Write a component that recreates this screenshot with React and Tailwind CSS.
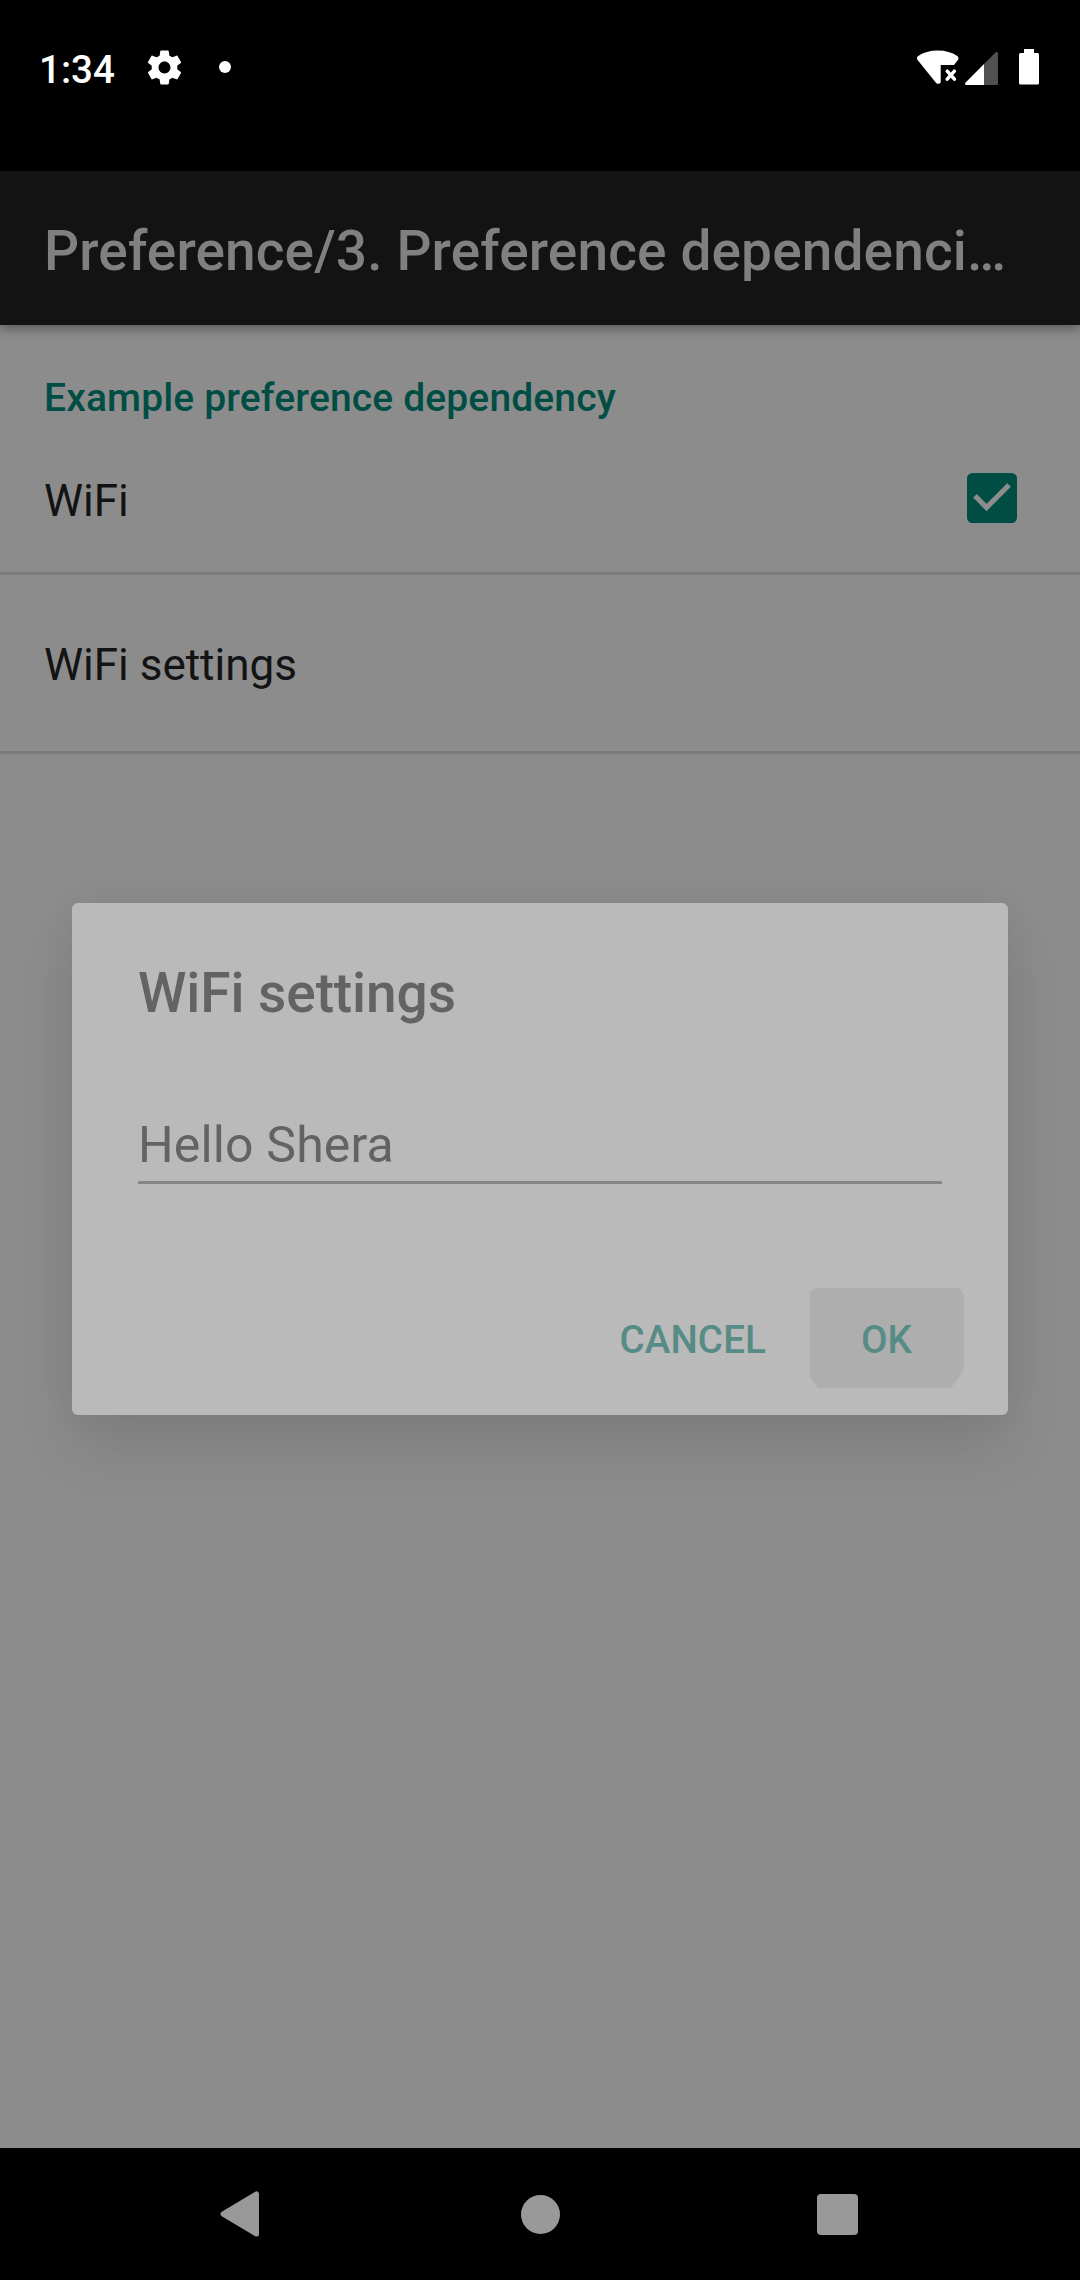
function GearIcon() {
  return (
    <svg className="ml-[30px] h-[41px] w-[41px] shrink-0" viewBox="0 0 24 24" fill="#fff">
      <path d="M19.43 12.98c.04-.32.07-.64.07-.98s-.03-.66-.07-.98l2.11-1.65c.19-.15.24-.42.12-.64l-2-3.46c-.12-.22-.39-.3-.61-.22l-2.49 1c-.52-.4-1.08-.73-1.69-.98l-.38-2.65C14.46 2.18 14.25 2 14 2h-4c-.25 0-.46.18-.49.42l-.38 2.65c-.61.25-1.17.59-1.69.98l-2.49-1c-.23-.09-.49 0-.61.22l-2 3.46c-.13.22-.07.49.12.64l2.11 1.65c-.04.32-.07.65-.07.98s.03.66.07.98l-2.11 1.65c-.19.15-.24.42-.12.64l2 3.46c.12.22.39.3.61.22l2.49-1c.52.4 1.08.73 1.69.98l.38 2.65c.03.24.24.42.49.42h4c.25 0 .46-.18.49-.42l.38-2.65c.61-.25 1.17-.59 1.69-.98l2.49 1c.23.09.49 0 .61-.22l2-3.46c.12-.22.07-.49-.12-.64l-2.11-1.65zM12 15.5c-1.93 0-3.5-1.57-3.5-3.5s1.57-3.5 3.5-3.5 3.5 1.57 3.5 3.5-1.57 3.5-3.5 3.5z" />
    </svg>
  );
}

function StatusBar() {
  return (
    <header className="flex h-[171px] shrink-0 items-start justify-between bg-black pr-[41px] pl-[39px]">
      <div className="flex h-[134px] items-center">
        <span className="relative top-[3px] w-[75px] text-[38.5px] leading-[46px] font-medium whitespace-nowrap text-white">1:34</span>
        <GearIcon />
        <span className="ml-[34px] h-3 w-3 rounded-full bg-white" />
      </div>
      <div className="flex h-[134px] items-center">
        <svg className="h-[36px] w-[42px]" viewBox="0 0 42 36" fill="#fff">
          <path d="M.6 11C-.4 9.600-.2 8 1.200 7 6.500 3.500 13 1.600 20.800 1.600S35 3.500 40.300 7c1.400 1 1.600 2.600.6 4L37 16H23.700v17.500c-1.200 1.700-3.700 1.700-5 0z" />
          <path d="M30.200 22.200l7.200 8M37.400 22.200L30.200 30.200" stroke="#fff" strokeWidth="3.500" strokeLinecap="round" />
        </svg>
        <svg className="ml-[6px] h-[36px] w-[34px]" viewBox="0 0 34 36">
          <path d="M19 15L30.500 3.500c1-1 2.500-.5 2.500 1V34.500a1.500 1.500 0 0 1-1.500 1.500H19z" fill="#505050" />
          <path d="M19 15V36H1.500C0 36-.4 34.500.6 33.500z" fill="#fff" />
        </svg>
        <svg className="ml-[20px] h-[36px] w-[20px]" viewBox="0 0 20 36" fill="#fff">
          <path d="M5 0h10v4h3.500A1.500 1.500 0 0 1 20 5.500v28.500a1.500 1.500 0 0 1-1.500 1.500h-17A1.500 1.500 0 0 1 0 34V5.500A1.500 1.500 0 0 1 1.500 4H5z" />
        </svg>
      </div>
    </header>
  );
}

function Checkbox() {
  return (
    <svg className="relative -top-[3px] h-[50px] w-[50px]" viewBox="0 0 50 50">
      <rect width="50" height="50" rx="5.500" fill="#004d43" />
      <path d="M8 22.800l11.500 11.700L42 12" fill="none" stroke="#8c8c8c" strokeWidth="5.200" />
    </svg>
  );
}

function Dialog() {
  return (
    <section className="absolute top-[903px] left-[72px] flex h-[512px] w-[936px] flex-col rounded-[6px] bg-[#bababa] px-[66px] text-[#636363] shadow-[0_36px_60px_0_rgba(0,0,0,0.09),0_0_40px_0_rgba(0,0,0,0.04)]">
      <h2 className="mt-[57px] text-[55px] leading-[66px] font-medium tracking-[-0.08px]">WiFi settings</h2>
      <div className="mt-[89px] h-[69px] border-b-[3px] border-[#868686] text-[50px] leading-[60px] tracking-[0.15px]">Hello Shera</div>
      <div className="-mr-[22px] mt-[104px] flex h-[100px] items-center justify-end text-[38.5px] font-medium text-[#568c85]">
        <button className="relative top-[2px] mr-[44px] leading-[46px] tracking-[0.15px]">CANCEL</button>
        <button className="h-[100px] w-[154px] bg-[#aeaeae] pt-1 pr-px leading-[46px] [clip-path:polygon(0_6px,2px_2px,6px_0,148px_0,151px_2px,154px_8px,154px_80px,149px_89px,141px_100px,8px_100px,0_89px)]">OK</button>
      </div>
    </section>
  );
}

function NavBar() {
  return (
    <nav className="flex h-[132px] shrink-0 items-center bg-black pl-[220px]">
      <svg className="h-[46px] w-[40px]" viewBox="0 0 40 46">
        <path d="M3 23L36.500 3V43z" fill="#999" stroke="#999" strokeWidth="5" strokeLinejoin="round" />
      </svg>
      <span className="ml-[261px] h-[39px] w-[39px] rounded-full bg-[#999]" />
      <span className="ml-[257px] h-[41px] w-[41px] rounded-[4px] bg-[#999]" />
    </nav>
  );
}

export default function App() {
  return (
    <div className="relative flex h-[2280px] w-[1080px] flex-col overflow-hidden bg-[#8c8c8c] font-['Roboto',sans-serif]">
      <StatusBar />
      <div className="z-10 flex h-[154px] shrink-0 items-center bg-[#131313] px-[44px] shadow-[0_3px_11px_rgba(0,0,0,0.4)]">
        <h1 className="relative top-[3px] text-[55px] leading-[66px] font-medium tracking-[0.13px] whitespace-nowrap text-[#808080]">Preference/3. Preference dependenci…</h1>
      </div>
      <main className="flex-1 text-[44px] leading-[52px] text-[#131313]">
        <div className="flex h-[105px] items-end px-[44px] pb-[9px] text-[39px] leading-[46px] font-medium tracking-[0.14px] text-[#004d43]">Example preference dependency</div>
        <div className="flex h-[145px] items-center justify-between border-b-[3px] border-[#7b7b7b] pr-[63px] pl-[44px]">
          <span>WiFi</span>
          <Checkbox />
        </div>
        <div className="flex h-[179px] items-center border-b-[3px] border-[#7b7b7b] px-[44px] pt-1">WiFi settings</div>
      </main>
      <Dialog />
      <NavBar />
    </div>
  );
}
